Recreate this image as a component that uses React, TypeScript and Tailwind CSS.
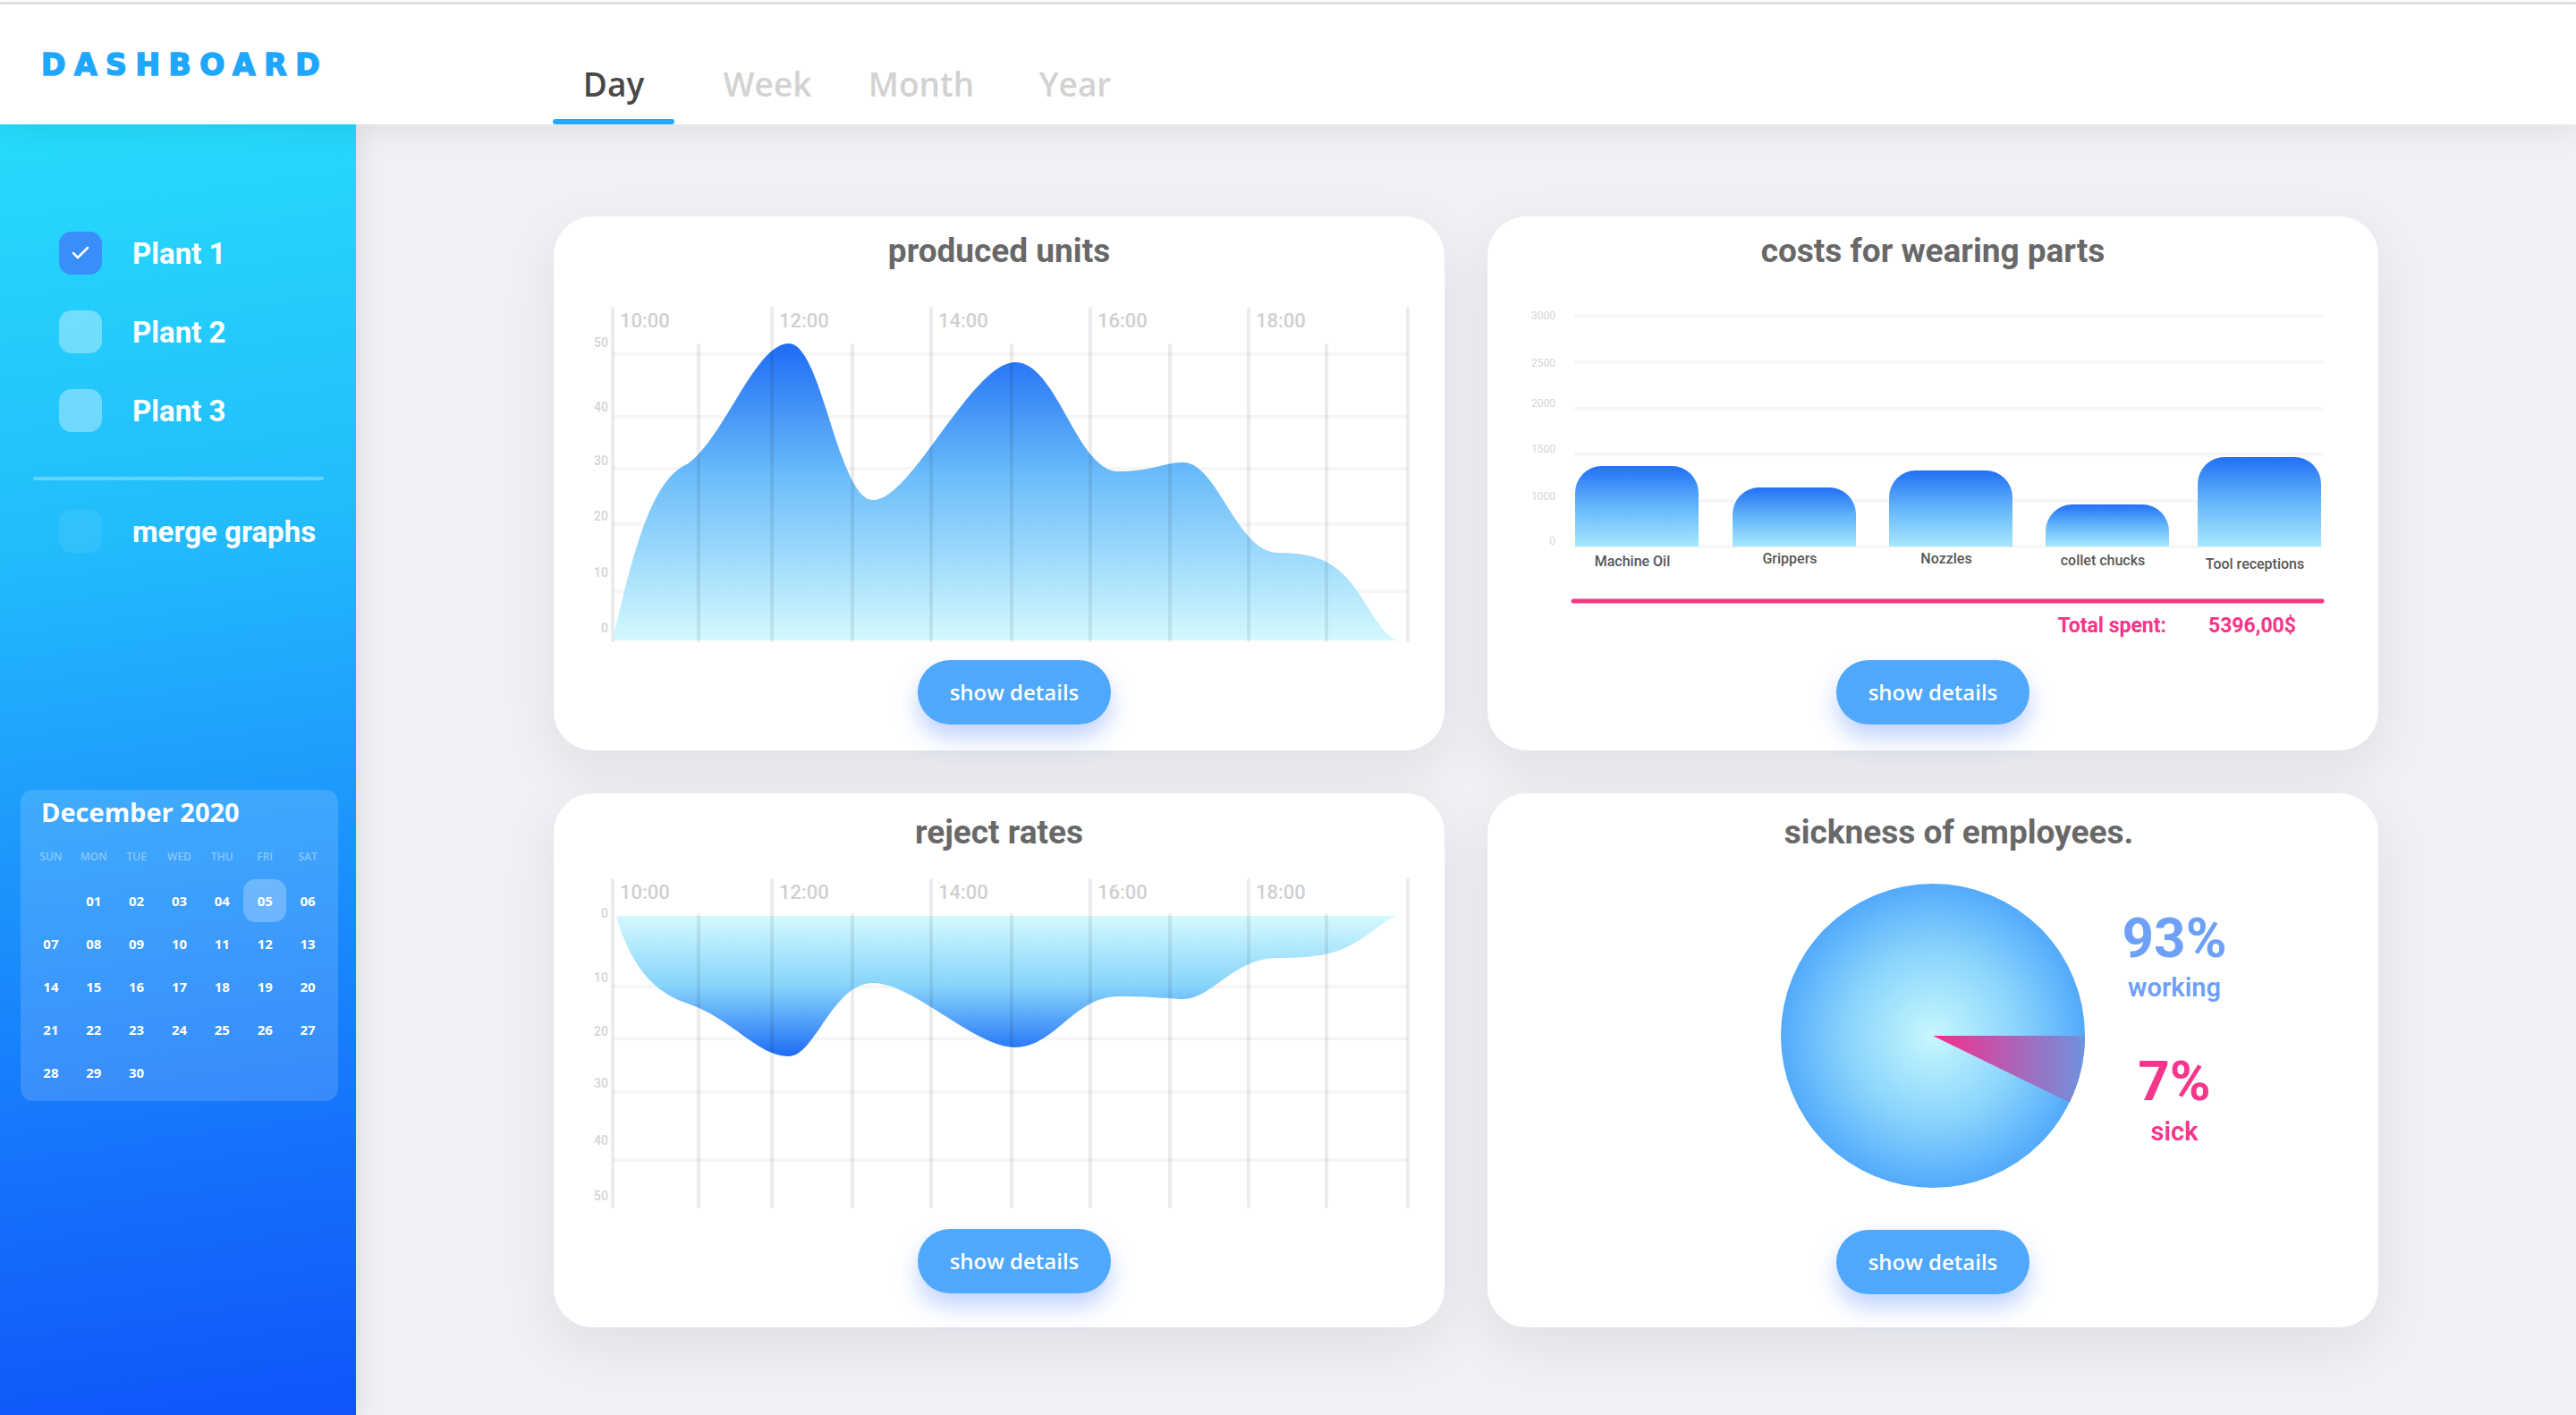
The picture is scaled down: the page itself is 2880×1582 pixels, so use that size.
import { Check } from "lucide-react";

const calRows = [
  ["", "01", "02", "03", "04", "05", "06"],
  ["07", "08", "09", "10", "11", "12", "13"],
  ["14", "15", "16", "17", "18", "19", "20"],
  ["21", "22", "23", "24", "25", "26", "27"],
  ["28", "29", "30", "", "", "", ""],
];
const weekDays = ["SUN", "MON", "TUE", "WED", "THU", "FRI", "SAT"];
const tabs = ["Day", "Week", "Month", "Year"];
const times = ["10:00", "12:00", "14:00", "16:00", "18:00"];
const mainLines = [66, 244, 422, 600, 777, 955];
const midLines = [162, 334, 512, 689, 864];

function Box({ state }: { state: "on" | "off" | "faint" }) {
  if (state === "on") {
    return (
      <div className="w-[48px] h-[48px] rounded-[14px] bg-[#3a8ef9] flex items-center justify-center">
        <Check size={24} strokeWidth={2.5} color="white" />
      </div>
    );
  }
  return <div className={"w-[48px] h-[48px] rounded-[14px] " + (state === "off" ? "bg-white/35" : "bg-white/[0.07]")} />;
}

function SideRow({ state, label }: { state: "on" | "off" | "faint"; label: string }) {
  return (
    <div className="flex items-center gap-[34px]">
      <Box state={state} />
      <span className="text-white font-bold text-[33px] leading-none">{label}</span>
    </div>
  );
}

function Calendar() {
  return (
    <div className="ml-[23px] w-[355px] h-[348px] rounded-[14px] bg-white/15 font-['Open_Sans',sans-serif] text-white">
      <div className="pt-[10px] pl-[23px] text-[29px] font-bold leading-none">December 2020</div>
      <div className="mt-[24px] px-[10px] grid grid-cols-7">
        {weekDays.map((d) => (
          <div key={d} className="h-[24px] flex items-center justify-center text-[12px] font-semibold text-white/40">
            {d}
          </div>
        ))}
      </div>
      <div className="mt-[13px] px-[10px] grid grid-cols-7">
        {calRows.flat().map((d, i) => (
          <div key={i} className="h-[48px] flex items-center justify-center">
            {d && (
              <span
                className={
                  "w-[48px] h-[48px] flex items-center justify-center rounded-[14px] text-[15px] font-bold " +
                  (d === "05" ? "bg-white/25" : "")
                }
              >
                {d}
              </span>
            )}
          </div>
        ))}
      </div>
    </div>
  );
}

function ShowDetails({ shift, className }: { shift?: boolean; className: string }) {
  return (
    <button
      className={
        "h-[72px] w-[216px] rounded-full bg-[#4fa8fb] text-white text-[24px] font-semibold font-['Open_Sans',sans-serif] shadow-[0_14px_26px_rgba(70,130,250,0.35)] " +
        (shift ? "ml-[34px] " : "") +
        className
      }
    >
      show details
    </button>
  );
}

function Card({ title, titleClass, children }: { title: string; titleClass: string; children: React.ReactNode }) {
  return (
    <div className="h-[597px] bg-white rounded-[44px] shadow-[0_20px_60px_rgba(20,30,70,0.08)] flex flex-col items-center">
      <h2 className={"text-[37px] leading-none font-bold text-[#686868] " + titleClass}>{title}</h2>
      {children}
    </div>
  );
}

function Grid({ top, bottom, midTop, labelY }: { top: number; bottom: number; midTop: number; labelY: number }) {
  return (
    <g>
      {mainLines.map((x) => (
        <line key={x} x1={x} x2={x} y1={top} y2={bottom} stroke="#000" strokeOpacity={0.075} strokeWidth={4} strokeLinecap="round" />
      ))}
      {midLines.map((x) => (
        <line key={x} x1={x} x2={x} y1={midTop} y2={bottom} stroke="#000" strokeOpacity={0.075} strokeWidth={4} strokeLinecap="round" />
      ))}
      {times.map((t, i) => (
        <text key={t} x={mainLines[i] + 8} y={labelY} fontSize={22} fontWeight={500} fill="#d0d0d0">
          {t}
        </text>
      ))}
    </g>
  );
}

function ProducedChart() {
  const yl: [number, string][] = [[51, "50"], [123, "40"], [183, "30"], [245, "20"], [308, "10"], [370, "0"]];
  return (
    <svg width={996} height={400} className="block mt-[33px]" fontFamily="Roboto, sans-serif">
      <defs>
        <linearGradient id="prodG" x1="0" y1="52" x2="0" y2="384" gradientUnits="userSpaceOnUse">
          <stop offset="0" stopColor="#1e6cf5" />
          <stop offset="0.45" stopColor="#6cbdfa" />
          <stop offset="1" stopColor="#d4f9fe" />
        </linearGradient>
      </defs>
      {[64, 134, 192, 254, 329].map((y) => (
        <line key={y} x1={66} x2={955} y1={y} y2={y} stroke="#f6f6f6" strokeWidth={4} />
      ))}
      <path
        d="M66,384 C88,290 108,205 149,187 C190,160 225,52 263,52 C300,52 318,227 357,227 C400,227 468,73 516,73 C563,73 585,195 631,195 C670,195 682,185 704,185 C742,185 764,286 810,286 C858,286 878,300 898,328 C922,365 932,384 947,384 Z"
        fill="url(#prodG)"
      />
      <Grid top={13} bottom={384} midTop={54} labelY={34} />
      {yl.map(([y, t]) => (
        <text key={t} x={61} y={y + 5} fontSize={14} fontWeight={500} fill="#d4d4d4" textAnchor="end">
          {t}
        </text>
      ))}
    </svg>
  );
}

function RejectChart() {
  const yl: [number, string][] = [[44, "0"], [116, "10"], [176, "20"], [234, "30"], [298, "40"], [360, "50"]];
  return (
    <svg width={996} height={395} className="block mt-[28px]" fontFamily="Roboto, sans-serif">
      <defs>
        <linearGradient id="rejG" x1="0" y1="47" x2="0" y2="204" gradientUnits="userSpaceOnUse">
          <stop offset="0" stopColor="#d4f9fe" />
          <stop offset="0.5" stopColor="#86d4fb" />
          <stop offset="1" stopColor="#1e6cf5" />
        </linearGradient>
      </defs>
      {[126, 184, 244, 320].map((y) => (
        <line key={y} x1={66} x2={955} y1={y} y2={y} stroke="#f6f6f6" strokeWidth={4} />
      ))}
      <path
        d="M70,47 C85,100 110,132 150,145 C200,162 228,204 263,204 C292,204 312,122 357,122 C402,122 470,194 516,194 C560,194 582,137 631,137 C672,137 690,140 704,140 C736,140 760,94 809,94 C840,94 862,92 882,84 C915,70 930,47 947,47 Z"
        fill="url(#rejG)"
      />
      <Grid top={7} bottom={372} midTop={46} labelY={28} />
      {yl.map(([y, t]) => (
        <text key={t} x={61} y={y + 5} fontSize={14} fontWeight={500} fill="#d4d4d4" textAnchor="end">
          {t}
        </text>
      ))}
    </svg>
  );
}

function CostChart() {
  const bars = [
    { x: 98, top: 189, label: "Machine Oil", ly: 295 },
    { x: 274, top: 213, label: "Grippers", ly: 292 },
    { x: 449, top: 194, label: "Nozzles", ly: 292 },
    { x: 624, top: 232, label: "collet chucks", ly: 294 },
    { x: 794, top: 179, label: "Tool receptions", ly: 298 },
  ];
  const yl: [number, string][] = [[21, "3000"], [74, "2500"], [119, "2000"], [170, "1500"], [223, "1000"], [273, "0"]];
  const w = 138;
  return (
    <svg width={996} height={350} className="block mt-[33px]" fontFamily="Roboto, sans-serif">
      <defs>
        <linearGradient id="barG" x1="0" y1="0" x2="0" y2="1">
          <stop offset="0" stopColor="#2270f6" />
          <stop offset="0.5" stopColor="#64b6fa" />
          <stop offset="1" stopColor="#a6e8fe" />
        </linearGradient>
      </defs>
      {[21, 73, 125, 176, 228, 279].map((y) => (
        <line key={y} x1={99} x2={933} y1={y} y2={y} stroke="#f6f6f6" strokeWidth={4} strokeLinecap="round" />
      ))}
      {yl.map(([y, t]) => (
        <text key={t} x={76} y={y + 4} fontSize={12} fill="#d5d5d5" textAnchor="end">
          {t}
        </text>
      ))}
      {bars.map((b) => (
        <g key={b.label}>
          <path
            d={`M${b.x},279 V${b.top + 30} A30,30 0 0 1 ${b.x + 30},${b.top} H${b.x + w - 30} A30,30 0 0 1 ${b.x + w},${b.top + 30} V279 Z`}
            fill="url(#barG)"
          />
          <text x={b.x + w / 2 - 5} y={b.ly + 6} fontSize={16} fontWeight={500} fill="#575757" textAnchor="middle">
            {b.label}
          </text>
        </g>
      ))}
      <line x1={96} x2={933} y1={340} y2={340} stroke="#fb3685" strokeWidth={5} strokeLinecap="round" />
    </svg>
  );
}

function Pie() {
  return (
    <svg width={340} height={340} className="block">
      <defs>
        <radialGradient id="pieG" cx="50%" cy="50%" r="50%">
          <stop offset="0" stopColor="#c8f7fe" />
          <stop offset="0.55" stopColor="#8bd5fc" />
          <stop offset="1" stopColor="#53aafb" />
        </radialGradient>
        <linearGradient id="wedgeG" x1="170" y1="0" x2="340" y2="0" gradientUnits="userSpaceOnUse">
          <stop offset="0" stopColor="#f82c8c" />
          <stop offset="1" stopColor="#6e93dd" />
        </linearGradient>
      </defs>
      <circle cx={170} cy={170} r={170} fill="url(#pieG)" />
      <path d="M170,170 L340,170 A170,170 0 0 1 322.8,244.5 Z" fill="url(#wedgeG)" />
    </svg>
  );
}

export default function App() {
  return (
    <div className="w-[2880px] h-[1582px] overflow-hidden flex flex-col bg-[#f0f1f5] font-['Roboto',sans-serif]">
      <div className="h-[2px] bg-white shrink-0" />
      <header className="relative z-20 h-[137px] shrink-0 bg-white border-t-[3px] border-[#e0e0e4] shadow-[0_8px_30px_rgba(0,0,0,0.07)] flex">
        <div className="w-[398px] pl-[46px] pt-[51px]">
          <span className="font-['DejaVu_Sans',sans-serif] font-bold text-[33px] leading-none tracking-[0.29em] text-[#1fa6fd] [-webkit-text-stroke:1.6px_#1fa6fd]">
            DASHBOARD
          </span>
        </div>
        <nav className="ml-[202px] flex">
          {tabs.map((t, i) => (
            <div key={t} className="w-[172px] flex flex-col items-center justify-end">
              <span
                className={
                  "font-['Open_Sans',sans-serif] font-semibold text-[37px] leading-none mb-[21px] " +
                  (i === 0 ? "text-[#484848]" : "text-[#d2d2d2]")
                }
              >
                {t}
              </span>
              <div className={"h-[6px] w-[136px] rounded-full " + (i === 0 ? "bg-[#1fa9fd]" : "bg-transparent")} />
            </div>
          ))}
        </nav>
      </header>

      <div className="flex flex-1">
        <aside className="relative z-10 w-[398px] shrink-0 flex flex-col bg-[linear-gradient(172deg,#26dcfb_0%,#22bcfc_32%,#1d98fc_54%,#1470fb_80%,#1054fa_100%)] shadow-[6px_0_26px_rgba(0,0,0,0.08)]">
          <div className="pt-[120px] pl-[66px] flex flex-col gap-[40px]">
            <SideRow state="on" label="Plant 1" />
            <SideRow state="off" label="Plant 2" />
            <SideRow state="off" label="Plant 3" />
          </div>
          <div className="mt-[50px] ml-[37px] w-[325px] h-[4px] rounded-full bg-white/30" />
          <div className="mt-[33px] pl-[66px]">
            <SideRow state="faint" label="merge graphs" />
          </div>
          <div className="mt-[265px]">
            <Calendar />
          </div>
        </aside>

        <main className="flex-1 pl-[221px] pt-[103px]">
          <div className="grid grid-cols-[996px_996px] gap-[48px]">
            <Card title="produced units" titleClass="pt-[20px]">
              <ProducedChart />
              <ShowDetails shift className="mt-[6px]" />
            </Card>
            <Card title="costs for wearing parts" titleClass="pt-[20px]">
              <CostChart />
              <div className="self-stretch mt-[4px] h-[28px] flex items-center justify-end pr-[92px] gap-[47px] text-[23px] font-bold text-[#f83489]">
                <span>Total spent:</span>
                <span>5396,00$</span>
              </div>
              <ShowDetails className="mt-[24px]" />
            </Card>
            <Card title="reject rates" titleClass="pt-[25px]">
              <RejectChart />
              <ShowDetails shift className="mt-[2px]" />
            </Card>
            <Card title="sickness of employees." titleClass="pt-[25px] ml-[58px]">
              <div className="mt-[39px] pl-[180px] flex">
                <Pie />
                <div className="ml-[20px] w-[160px] flex flex-col items-center">
                  <span className="mt-[30px] text-[62px] leading-none font-bold text-[#6ea0f8]">93%</span>
                  <span className="mt-[10px] text-[29px] leading-none font-semibold text-[#6ea0f8]">working</span>
                  <span className="mt-[59px] text-[62px] leading-none font-bold text-[#f7358a]">7%</span>
                  <span className="mt-[11px] text-[29px] leading-none font-semibold text-[#f7358a]">sick</span>
                </div>
              </div>
              <ShowDetails className="mt-[47px]" />
            </Card>
          </div>
        </main>
      </div>
    </div>
  );
}
